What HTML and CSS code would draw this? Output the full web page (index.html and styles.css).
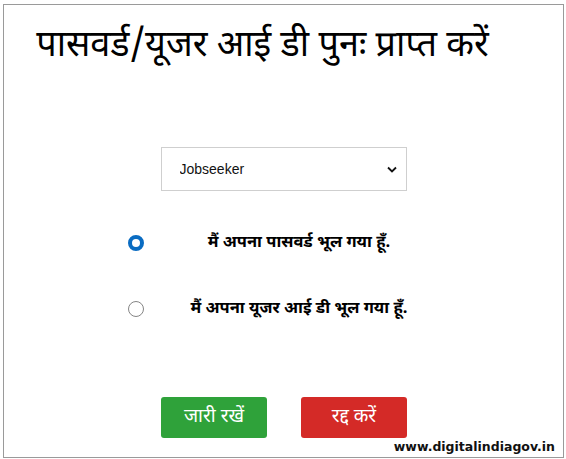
FILE: index.html
```html
<!DOCTYPE html>
<html lang="hi">
<head>
<meta charset="utf-8">
<title>पासवर्ड/यूजर आई डी पुनः प्राप्त करें</title>
<link rel="stylesheet" href="styles.css">
</head>
<body>
<div class="frame">
  <h1 class="title">पासवर्ड/यूजर आई डी पुनः प्राप्त करें</h1>
  <div class="select-wrap">
    <select class="role">
      <option>Jobseeker</option>
    </select>
    <svg class="chev" width="10" height="7" viewBox="0 0 10 7"><path d="M1 1.5 L5 5.5 L9 1.5" fill="none" stroke="#111" stroke-width="1.8"/></svg>
  </div>
  <div class="options">
    <div class="opt">
      <span class="radio checked"></span>
      <span class="label">मैं अपना पासवर्ड भूल गया हूँ.</span>
    </div>
    <div class="opt">
      <span class="radio"></span>
      <span class="label">मैं अपना यूजर आई डी भूल गया हूँ.</span>
    </div>
  </div>
  <div class="actions">
    <button class="btn btn-go">जारी रखें</button>
    <button class="btn btn-cancel">रद्द करें</button>
  </div>
  <div class="mark">www.digitalindiagov.in</div>
</div>
</body>
</html>
```
FILE: styles.css
```css
html, body {
  margin: 0;
  padding: 0;
  background: #fff;
}
body {
  font-family: "Noto Sans Devanagari", "Noto Sans", "Liberation Sans", sans-serif;
  color: #000;
}
.frame {
  position: relative;
  box-sizing: border-box;
  height: 454px;
  margin: 4px 2px 1px 3px;
  border: 1px solid #9a9a9a;
}
.title {
  margin: 18px 0 0;
  padding-right: 42px;
  font-size: 36px;
  font-weight: normal;
  line-height: 50px;
  text-align: center;
}
.select-wrap {
  position: relative;
  width: 246px;
  height: 44px;
  margin: 74px auto 0;
}
.role {
  appearance: none;
  -webkit-appearance: none;
  box-sizing: border-box;
  width: 100%;
  height: 100%;
  border: 1px solid #cfcfcf;
  border-radius: 0;
  background: #fff;
  padding: 0 0 0 18px;
  font-family: "Liberation Sans", Arial, sans-serif;
  font-size: 14px;
  color: #111;
}
.chev {
  position: absolute;
  right: 10px;
  top: 19px;
  pointer-events: none;
}
.options {
  display: flex;
  flex-direction: column;
  gap: 50px;
  margin: 44px 0 0 124px;
}
.opt {
  display: grid;
  grid-template-columns: 16px 310px;
  align-items: center;
  height: 16px;
}
.radio {
  box-sizing: border-box;
  width: 16px;
  height: 16px;
  border-radius: 50%;
  border: 1.5px solid #858585;
  background: #fff;
}
.radio.checked {
  border: 4px solid #0a6cc2;
}
.label {
  text-align: center;
  font-weight: bold;
  font-size: 16.5px;
  line-height: 16px;
}
.actions {
  display: flex;
  justify-content: center;
  gap: 34px;
  margin-top: 80px;
  padding-left: 1px;
}
.btn {
  width: 106px;
  height: 41px;
  border: none;
  border-radius: 3px;
  color: #fff;
  font-family: "Noto Sans Devanagari", "Noto Sans", sans-serif;
  font-size: 19px;
  padding: 0;
}
.btn-go {
  background: #2fa23a;
}
.btn-cancel {
  background: #d42a27;
}
.mark {
  position: absolute;
  right: 8px;
  bottom: 3px;
  font-family: "DejaVu Sans", "Liberation Sans", sans-serif;
  font-weight: bold;
  font-size: 12.5px;
  color: #111;
}
```
